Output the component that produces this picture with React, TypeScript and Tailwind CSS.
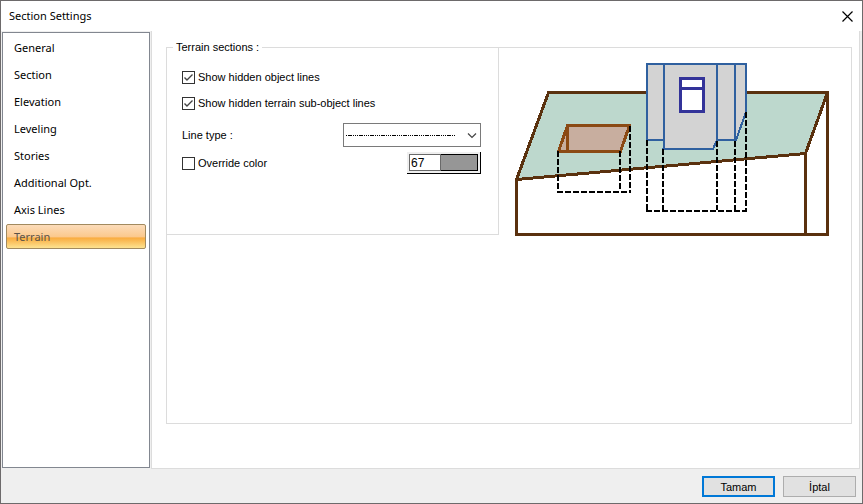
import { useState } from "react";

const pages = [
  "General",
  "Section",
  "Elevation",
  "Leveling",
  "Stories",
  "Additional Opt.",
  "Axis Lines",
  "Terrain",
];

function CheckBox({ label, initial }: { label: string; initial: boolean }) {
  const [checked, setChecked] = useState(initial);
  return (
    <label className="flex items-center gap-[3px]">
      <span className="grid size-[13px] shrink-0">
        <input
          type="checkbox"
          checked={checked}
          onChange={(e) => setChecked(e.target.checked)}
          className="col-start-1 row-start-1 size-[13px] appearance-none border border-[#333333] bg-white"
        />
        {checked && (
          <svg viewBox="0 0 13 13" className="pointer-events-none col-start-1 row-start-1 size-[13px]">
            <path d="M2.5 6.5 L5 9 L10.5 3.5" fill="none" stroke="#444" strokeWidth="1.4" />
          </svg>
        )}
      </span>
      <span>{label}</span>
    </label>
  );
}

function TerrainDrawing() {
  return (
    <svg
      viewBox="514 60 316 178"
      className="mt-3 ml-[15px] h-[178px] w-[316px] shrink-0"
      fill="none"
      role="img"
      aria-label="Terrain section preview"
    >
      <g stroke="#5a310e" strokeWidth="3" strokeLinejoin="round" shapeRendering="crispEdges">
        <path d="M548.5 92.5 H827.5 L805.5 153.5 L516.5 179.5 Z" fill="#bdd8cd" />
        <path d="M516.5 179.5 V234.5 H827.5 V92.5 M805.5 153.5 V234.5" />
      </g>
      <g stroke="#8b4a14" strokeWidth="3" strokeLinejoin="round" shapeRendering="crispEdges">
        <path d="M567.5 125.5 H629.5 L620.5 151.5 H558.5 Z" fill="#c8ae9f" />
        <path d="M567.5 125.5 V151.5" />
      </g>
      <g stroke="#2f609f" strokeWidth="2" shapeRendering="crispEdges">
        <path d="M647 64 H746 V112 L736 140 H717 L713 149 H664 V140 H647 Z" fill="#d3d3d3" />
        <path d="M664 64 V149 M662 149 H664 M717 64 V140 M735 64 V140" />
      </g>
      <g stroke="#333399" strokeWidth="3" strokeLinejoin="round" shapeRendering="crispEdges">
        <rect x="680.5" y="78.5" width="23" height="33" fill="#fff" />
        <path d="M680.5 88.5 H703.5" />
      </g>
      <g stroke="#000" strokeWidth="2" strokeDasharray="6 2" shapeRendering="crispEdges">
        <path d="M558 151 V191" />
        <path d="M620 151 V191" />
        <path d="M630 126 V191" />
        <path d="M557 192 H631" />
        <path d="M647 140 V210" />
        <path d="M663 149 V210" />
        <path d="M717 141 V210" />
        <path d="M735 141 V210" />
        <path d="M746 112 V210" />
        <path d="M646 211 H747" />
      </g>
    </svg>
  );
}

export default function App() {
  const [page, setPage] = useState("Terrain");
  const [color, setColor] = useState("67");

  return (
    <div className="flex min-h-screen flex-col border border-[#6d6a6b] bg-[#efefef] font-['Liberation_Sans',Arial,sans-serif] text-[11px] leading-4 text-black">
      <header className="flex h-[30px] items-center justify-between bg-white pr-[7px] pl-2">
        <h1 className="font-['Noto_Sans','Open_Sans',sans-serif]">Section Settings</h1>
        <button type="button" aria-label="Close" className="grid size-4 place-items-center">
          <svg viewBox="0 0 11 11" className="size-[11px]">
            <path d="M0.5 0.5 L10.5 10.5 M10.5 0.5 L0.5 10.5" stroke="#000" strokeWidth="1.2" />
          </svg>
        </button>
      </header>

      <main className="flex flex-1 gap-px pr-0.5 pl-px">
        <nav className="mt-px mb-px flex w-[148px] shrink-0 flex-col gap-0.5 border border-[#828790] bg-white px-[3px] pt-0.5 font-['Noto_Sans','Open_Sans',sans-serif]">
          {pages.map((name) => (
            <button
              key={name}
              type="button"
              onClick={() => setPage(name)}
              aria-current={page === name ? "page" : undefined}
              className={
                page === name
                  ? "h-[25px] rounded-[2px] border border-[#a28a5f] bg-[linear-gradient(#fcdcba_0%,#fbc88c_52%,#f9ab3f_56%,#fde391_100%)] px-[7px] text-left text-[#5b5248]"
                  : "h-[25px] border border-transparent px-[7px] text-left"
              }
            >
              {name}
            </button>
          ))}
        </nav>

        <section className="flex flex-1 flex-col border-x border-b border-[#dcdcdc] bg-white pt-4 pr-[7px] pb-11 pl-3.5">
          <fieldset className="flex-1 border border-[#dcdcdc]">
            <legend className="ml-1.5 h-px px-[3px] leading-[1px]">Terrain sections :</legend>
            <div className="flex items-start">
              <div className="flex h-[187px] w-[332px] shrink-0 flex-col border-r border-b border-[#dcdcdc] pt-[21px] pr-[17px] pl-[15px]">
                <div className="flex flex-col gap-2.5">
                  <CheckBox label="Show hidden object lines" initial={true} />
                  <CheckBox label="Show hidden terrain sub-object lines" initial={true} />
                </div>
                <div className="mt-3 flex items-center justify-between">
                  <label htmlFor="line-type">Line type :</label>
                  <div className="grid w-[138px]">
                    <select
                      id="line-type"
                      className="col-start-1 row-start-1 h-6 w-full appearance-none border border-[#7a7a7a] bg-white"
                    >
                      <option aria-label="Dash dot" value="dash-dot" />
                    </select>
                    <svg viewBox="0 0 138 24" className="pointer-events-none col-start-1 row-start-1 h-6 w-full" fill="none">
                      <path d="M3 12.5 H112" stroke="#000" strokeDasharray="1 1 4 1 1 1 1 1" shapeRendering="crispEdges" />
                      <path d="M125 10.5 L129 14.5 L133 10.5" stroke="#444" strokeWidth="1.2" />
                    </svg>
                  </div>
                </div>
                <div className="mt-[5px] flex items-center justify-between">
                  <CheckBox label="Override color" initial={false} />
                  <div className="flex h-[22px] w-[74px] border-r border-b border-black bg-[#efefef] p-0.5">
                    <input
                      type="text"
                      aria-label="Color number"
                      value={color}
                      onChange={(e) => setColor(e.target.value)}
                      className="h-[17px] w-8 border border-[#696969] bg-white pl-px text-xs leading-[15px]"
                    />
                    <button
                      type="button"
                      aria-label="Pick color"
                      className="h-[17px] flex-1 border border-l-0 border-black bg-[#969696]"
                    />
                  </div>
                </div>
              </div>
              <TerrainDrawing />
            </div>
          </fieldset>
        </section>
      </main>

      <footer className="flex h-[34px] shrink-0 justify-end gap-2 pt-[7px] pr-1.5">
        <button type="button" className="h-[21px] w-[73px] border-2 border-[#0078d7] bg-[#e1e1e1] leading-4">
          Tamam
        </button>
        <button type="button" className="h-[21px] w-[73px] border border-[#adadad] bg-[#e1e1e1] leading-4">
          İptal
        </button>
      </footer>
    </div>
  );
}
